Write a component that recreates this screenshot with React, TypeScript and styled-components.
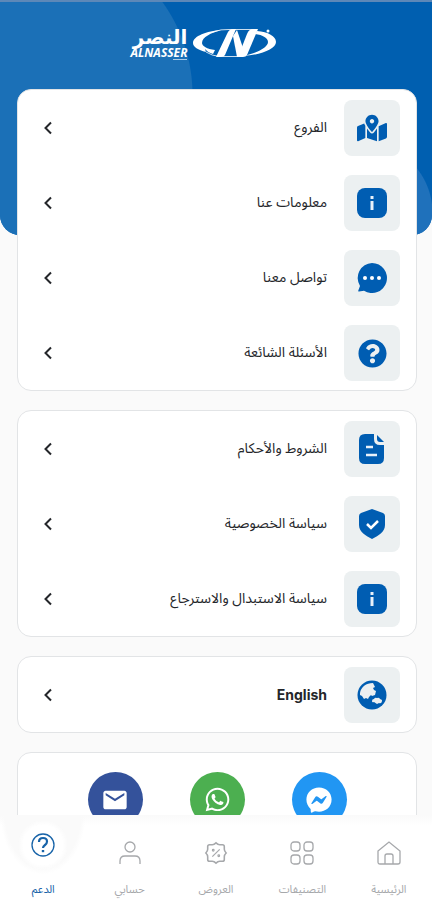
import React from 'react';
import styled, { createGlobalStyle } from 'styled-components';
import { FaFacebookMessenger, FaMapMarkedAlt, FaQuestionCircle, FaWhatsapp } from 'react-icons/fa';
import { MdEmail } from 'react-icons/md';

const arabic = '"Noto Sans Arabic", "DejaVu Sans", sans-serif';

const GlobalStyle = createGlobalStyle`
  *, *::before, *::after { box-sizing: border-box; }
  html, body, #root { height: 100%; }
  body { margin: 0; background: #fafafa; font-family: Roboto, ${arabic}; }
  button { border: 0; padding: 0; background: none; font: inherit; color: inherit; cursor: pointer; }
  ul { list-style: none; margin: 0; padding: 0; }
  svg { display: block; }
`;

const Screen = styled.div`
  display: flex;
  flex-direction: column;
  height: 100%;
`;

const Scroller = styled.main`
  flex: 1;
  min-height: 0;
  overflow-y: auto;
  scrollbar-width: none;
`;

const Header = styled.header`
  display: flex;
  justify-content: center;
  height: 235px;
  padding: 25px 24px 0 0;
  border-top: 2px solid #5d88b8;
  border-radius: 0 0 20px 20px;
  background:
    radial-gradient(circle at 34px 93px, #1b70b7 158px, transparent 159px),
    radial-gradient(circle at calc(100% - 71px) 211px, #1f71bb 71px, transparent 72px),
    #005fb0;
`;

const Brand = styled.div`
  display: flex;
  gap: 6px;
  height: 40px;
  color: #fff;
`;

const BrandWords = styled.div`
  display: flex;
  flex-direction: column;
  align-items: flex-start;
`;

const BrandArabic = styled.span`
  font: bold 20px/20px "DejaVu Sans", sans-serif;
`;

const BrandLatin = styled.span`
  font: italic bold 12px/12px "Open Sans", sans-serif;
`;

const BrandRule = styled.span`
  width: 14px;
  height: 1px;
  background: #a9cbe8;
`;

const Stack = styled.div`
  display: flex;
  flex-direction: column;
  gap: 19px;
  margin-top: -146px;
  padding: 0 15px 19px 17px;
`;

const Card = styled.section`
  padding: 10px 16px 9px;
  border: 1px solid #e2e4e6;
  border-radius: 14px;
  background: #fff;
`;

const Rows = styled.ul`
  display: grid;
  gap: 19px;
`;

const RowButton = styled.button`
  display: flex;
  align-items: center;
  gap: 17px;
  width: 100%;
  padding-left: 7px;
  text-align: right;
  color: #24262a;
`;

const IconTile = styled.span`
  display: grid;
  place-items: center;
  width: 56px;
  height: 56px;
  border-radius: 8px;
  background: #ecf0f1;
  color: #005db2;
`;

const RowLabel = styled.span<{ $latin?: boolean }>`
  flex: 1;
  font: ${p => (p.$latin ? 'bold 14px/20px Inter, sans-serif' : `14px/20px ${arabic}`)};
`;

const Socials = styled.div`
  display: flex;
  justify-content: center;
  gap: 47px;
  padding: 9px 0 10px;
`;

const SocialLink = styled.a<{ $color: string }>`
  display: grid;
  place-items: center;
  width: 55px;
  height: 55px;
  border-radius: 50%;
  background: ${p => p.$color};
  color: #fff;
`;

const NavBar = styled.nav`
  display: grid;
  grid-template-columns: repeat(5, 1fr);
  height: 85px;
  background: linear-gradient(#fafafa, #fff 10px);
`;

const NavButton = styled.button<{ $active?: boolean }>`
  display: flex;
  flex-direction: column;
  align-items: center;
  justify-content: space-between;
  padding: ${p => (p.$active ? '0 0 2px' : '26px 0 2px')};
  color: ${p => (p.$active ? '#1763a8' : '#a6a8ab')};
`;

const NavBubble = styled.span`
  display: grid;
  place-items: center;
  width: 100%;
  height: 60px;
  background:
    radial-gradient(circle, #fff 20px, transparent 25px),
    radial-gradient(ellipse at top, #fafafa 62%, transparent 70%);
`;

const NavLabel = styled.span`
  font: 11px/16px ${arabic};
`;

const Logo = () => (
  <svg width="84" height="34" viewBox="0 0 84 34" fill="currentColor" aria-hidden="true">
    <path d="M28 3C14 4 0 9 0 16c0 4 5 7 13 9l-1-3c2 2 4 4 8 5l2-4C14 22 9 19 9 16 9 10 18 6 28 3Z" />
    <path d="M64 4l-2 3c8 1 13 4 13 8 0 5-10 11-25 14 18-1 33-7 33-14C83 9 75 5 64 4Z" />
    <path d="M34 7q2-5 6-5h3L32 28q-1 2-4 2h-5Z" />
    <path d="M40 9l4-6 6 18-3 9h-3Z" />
    <path d="M54 7q2-5 6-5h5L54 28q-1 2-4 2h-5Z" />
    <path d="M20 5q8-3 16-2.500h26M13 25q6 4 14 4.500h20" fill="none" stroke="currentColor" strokeWidth=".8" />
    <circle cx="75" cy="4" r="1.500" />
  </svg>
);

const InfoIcon = () => (
  <svg width="30" height="30" viewBox="0 0 30 30" aria-hidden="true">
    <rect width="30" height="30" rx="8" fill="currentColor" />
    <path d="M15 13v9" stroke="#e8f1fa" strokeWidth="3" />
    <path d="M15 8v3" stroke="#e8f1fa" strokeWidth="3" />
  </svg>
);

const ChatIcon = () => (
  <svg width="30" height="30" viewBox="0 0 30 30" aria-hidden="true">
    <path d="M15 0a15 15 0 1 1-8 27.700L2 28.500Q.8 28.500 1.500 27L3 23A15 15 0 0 1 15 0Z" fill="currentColor" />
    <g fill="#fff"><circle cx="8" cy="15" r="2" /><circle cx="15" cy="15" r="2" /><circle cx="22" cy="15" r="2" /></g>
  </svg>
);

const DocumentIcon = () => (
  <svg width="26" height="30" viewBox="0 0 26 30" aria-hidden="true">
    <path d="M6 0h9v5q0 6 6 6h4v13q0 6-6 6H6q-6 0-6-6V6q0-6 6-6Z" fill="currentColor" />
    <path d="M18 1l7 7h-4q-3 0-3-3Z" fill="currentColor" />
    <path d="M7 13h7M7 21h11" stroke="#e8f1fa" strokeWidth="2.500" />
  </svg>
);

const ShieldIcon = () => (
  <svg width="26" height="30" viewBox="0 0 26 30" aria-hidden="true">
    <path d="M13 0l11 4q2 1 2 3v9c0 7-7 11-13 14C7 27 0 23 0 16V7q0-2 2-3Z" fill="currentColor" />
    <path d="M8 15l4 4 7-7" fill="none" stroke="#fff" strokeWidth="2.500" />
  </svg>
);

const GlobeIcon = () => (
  <svg width="30" height="30" viewBox="0 0 30 30" aria-hidden="true">
    <circle cx="15" cy="15" r="14.500" fill="currentColor" />
    <path d="M3 13C4 7 9 3 16 3l1 2 1 2-2 1 1 2 2 1-1 4-3 1-1-1-2 2-1 2-2-1-2 1-2-3-2-1Z" fill="#eceff1" />
    <path d="M15 21q0-2 2-2 1-2 3-1 2-1 3 1l2 1q0 4-3 3l-2 1-3-2q-2 1-2-1Z" fill="#eceff1" />
  </svg>
);

const Chevron = () => (
  <svg width="12" height="16" viewBox="0 0 12 16" fill="none" stroke="currentColor" strokeWidth="2" aria-hidden="true">
    <path d="M10 2.500 4.500 8l5.500 5.500" />
  </svg>
);

const line = { width: 24, height: 24, viewBox: '0 0 24 24', fill: 'none', stroke: 'currentColor', strokeWidth: 1.3, 'aria-hidden': true } as const;

const HomeIcon = () => (
  <svg {...line}><path d="M1 10 12 1l11 9v11q0 2-2 2H3q-2 0-2-2Z" /><path d="M8 23v-8q0-2 2-2h4q2 0 2 2v8" /></svg>
);
const GridIcon = () => (
  <svg {...line}>
    <rect x="1" y="1" width="9" height="9" rx="3" /><rect x="14" y="1" width="9" height="9" rx="3" />
    <rect x="1" y="14" width="9" height="9" rx="3" /><rect x="14" y="14" width="9" height="9" rx="3" />
  </svg>
);
const OffersIcon = () => (
  <svg {...line} viewBox="0 0 26 26">
    <path d="M13 2q2 2 4 2h3q2 0 2 2v3q0 2 2 4-2 2-2 4v3q0 2-2 2h-3q-2 0-4 2-2-2-4-2H6q-2 0-2-2v-3q0-2-2-4 2-2 2-4V6q0-2 2-2h3q2 0 4-2Z" strokeWidth="1.700" />
    <path d="M17 9l-8 8" /><circle cx="10" cy="10" r=".9" /><circle cx="16" cy="16" r=".9" />
  </svg>
);
const UserIcon = () => (
  <svg {...line}><circle cx="12" cy="6" r="5" /><path d="M2 23v-3q0-5 5-5h10q5 0 5 5v3" /></svg>
);
const HelpIcon = () => (
  <svg {...line}>
    <circle cx="12" cy="12" r="11" />
    <path d="M8 9q0-4 4-4t4 3.500q0 2-2 3.500t-2 3" strokeWidth="2.200" /><path d="M12 17v2.200" strokeWidth="2.400" />
  </svg>
);

type Item = { label: string; icon: React.ReactNode; latin?: boolean };

const groups: Item[][] = [
  [
    { label: 'الفروع', icon: <FaMapMarkedAlt size={30} /> },
    { label: 'معلومات عنا', icon: <InfoIcon /> },
    { label: 'تواصل معنا', icon: <ChatIcon /> },
    { label: 'الأسئلة الشائعة', icon: <FaQuestionCircle size={29} /> },
  ],
  [
    { label: 'الشروط والأحكام', icon: <DocumentIcon /> },
    { label: 'سياسة الخصوصية', icon: <ShieldIcon /> },
    { label: 'سياسة الاستبدال والاسترجاع', icon: <InfoIcon /> },
  ],
  [{ label: 'English', icon: <GlobeIcon />, latin: true }],
];

const tabs: Item[] = [
  { label: 'الرئيسية', icon: <HomeIcon /> },
  { label: 'التصنيفات', icon: <GridIcon /> },
  { label: 'العروض', icon: <OffersIcon /> },
  { label: 'حسابي', icon: <UserIcon /> },
];

export default function App() {
  return (
    <Screen dir="rtl" lang="ar">
      <GlobalStyle />
      <Scroller>
        <Header>
          <Brand>
            <Logo />
            <BrandWords>
              <BrandArabic>النصر</BrandArabic>
              <BrandLatin>ALNASSER</BrandLatin>
              <BrandRule />
            </BrandWords>
          </Brand>
        </Header>
        <Stack>
          {groups.map((items, i) => (
            <Card key={i}>
              <Rows>
                {items.map(item => (
                  <li key={item.label}>
                    <RowButton type="button">
                      <IconTile>{item.icon}</IconTile>
                      <RowLabel $latin={item.latin}>{item.label}</RowLabel>
                      <Chevron />
                    </RowButton>
                  </li>
                ))}
              </Rows>
            </Card>
          ))}
          <Card>
            <Socials>
              <SocialLink href="#messenger" aria-label="Messenger" $color="#2196f3"><FaFacebookMessenger size={26} /></SocialLink>
              <SocialLink href="#whatsapp" aria-label="WhatsApp" $color="#4caf50"><FaWhatsapp size={27} /></SocialLink>
              <SocialLink href="#email" aria-label="Email" $color="#34529b"><MdEmail size={28} /></SocialLink>
            </Socials>
          </Card>
        </Stack>
      </Scroller>
      <NavBar>
        {tabs.map(tab => (
          <NavButton type="button" key={tab.label}>
            {tab.icon}
            <NavLabel>{tab.label}</NavLabel>
          </NavButton>
        ))}
        <NavButton type="button" $active aria-current="page">
          <NavBubble><HelpIcon /></NavBubble>
          <NavLabel>الدعم</NavLabel>
        </NavButton>
      </NavBar>
    </Screen>
  );
}
